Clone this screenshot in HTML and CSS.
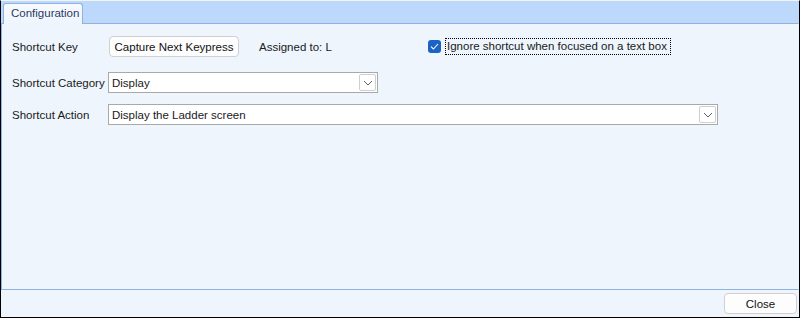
FILE: index.html
```html
<!DOCTYPE html>
<html lang="en">
<head>
  <meta charset="UTF-8">
  <title>Shortcut Configuration</title>
  <link rel="stylesheet" href="styles.css">
</head>
<body>
  <div class="window">
    <!-- tab strip -->
    <div class="tabstrip">
      <div class="tab">Configuration</div>
    </div>

    <div class="panel">
      <div class="row row-key">
        <span class="label">Shortcut Key</span>
        <button class="btn btn-capture">Capture Next Keypress</button>
        <span class="assigned">Assigned to: L</span>
        <label class="check">
          <span class="box">
            <svg width="9" height="7" viewBox="0 0 9 7"><path d="M1 3.6 L3.4 6 L8 1" fill="none" stroke="#fff" stroke-width="1.1"/></svg>
          </span>
          <span class="check-text">Ignore shortcut when focused on a text box</span>
        </label>
      </div>

      <div class="row row-category">
        <span class="label">Shortcut Category</span>
        <div class="combo combo-short">
          <span class="combo-text">Display</span>
          <span class="drop">
            <svg width="10" height="6" viewBox="0 0 10 6"><path d="M1 1 L5 5 L9 1" fill="none" stroke="#606060" stroke-width="1"/></svg>
          </span>
        </div>
      </div>

      <div class="row row-action">
        <span class="label">Shortcut Action</span>
        <div class="combo combo-long">
          <span class="combo-text">Display the Ladder screen</span>
          <span class="drop">
            <svg width="10" height="6" viewBox="0 0 10 6"><path d="M1 1 L5 5 L9 1" fill="none" stroke="#606060" stroke-width="1"/></svg>
          </span>
        </div>
      </div>
    </div>

    <div class="footer">
      <button class="btn btn-close">Close</button>
    </div>
  </div>
</body>
</html>
```

FILE: styles.css
```css
/* base */
* {
  box-sizing: border-box;
}
body {
  margin: 0;
  padding: 0;
  font-family: "Segoe UI", "Liberation Sans", Arial, sans-serif;
  font-size: 11.5px;
  color: #1a1a1a;
  background: #fff;
}

.window {
  width: 800px;
  height: 318px;
  display: flex;
  flex-direction: column;
  border: 1px solid #000;
  border-top-color: #f4f4f4;
  background: #eef5fd;
}

/* tab strip */
.tabstrip {
  height: 22px;
  background: #bcd9fc;
  display: flex;
  align-items: flex-end;
  padding-left: 2px;
}
.tab {
  width: 80px;
  height: 21px;
  margin-bottom: -1px;
  border: 1px solid #8eb2e2;
  border-bottom: none;
  border-radius: 3px 3px 0 0;
  background: linear-gradient(#f7faff, #eef5fd);
  color: #2a3a66;
  padding: 3px 0 0 7px;
  position: relative;
  z-index: 1;
}

/* main panel */
.panel {
  flex: 1;
  border: 1px solid #8eb2e2;
  border-right-color: #eef5fd;
  padding: 12px 0 0 10px;
}
.row {
  display: flex;
  align-items: center;
}
.label {
  width: 96px;
  flex-shrink: 0;
  white-space: nowrap;
}
.row-category {
  margin-top: 15px;
}
.row-action {
  margin-top: 11px;
}

/* buttons */
.btn {
  font: inherit;
  color: #111;
  background: #fdfdfd;
  border: 1px solid #d0d0d0;
  border-radius: 4px;
  height: 21px;
  padding: 0;
}
.btn-capture {
  width: 130px;
  margin-left: 1px;
}
.assigned {
  width: 169px;
  margin-left: 20px;
}

/* checkbox */
.check {
  display: flex;
  align-items: center;
}
.box {
  width: 13px;
  height: 13px;
  border-radius: 3px;
  background: #1b63c4;
  display: flex;
  align-items: center;
  justify-content: center;
}
.check-text {
  margin-left: 4px;
  padding: 1px 3px 2px 1px;
  border: 1px dotted #000;
}

/* combo boxes */
.combo {
  height: 21px;
  background: #fff;
  border: 1px solid #a9a9a9;
  display: flex;
  align-items: center;
  justify-content: space-between;
  padding: 0 1px 0 3px;
}
.combo-short {
  width: 270px;
}
.combo-long {
  width: 610px;
}
.drop {
  width: 17px;
  height: 17px;
  border: 1px solid #cfcfcf;
  border-radius: 2px;
  display: flex;
  align-items: center;
  justify-content: center;
}

/* footer */
.footer {
  height: 27px;
  display: flex;
  justify-content: flex-end;
  align-items: center;
  padding-right: 2px;
}
.btn-close {
  width: 73px;
}
```
